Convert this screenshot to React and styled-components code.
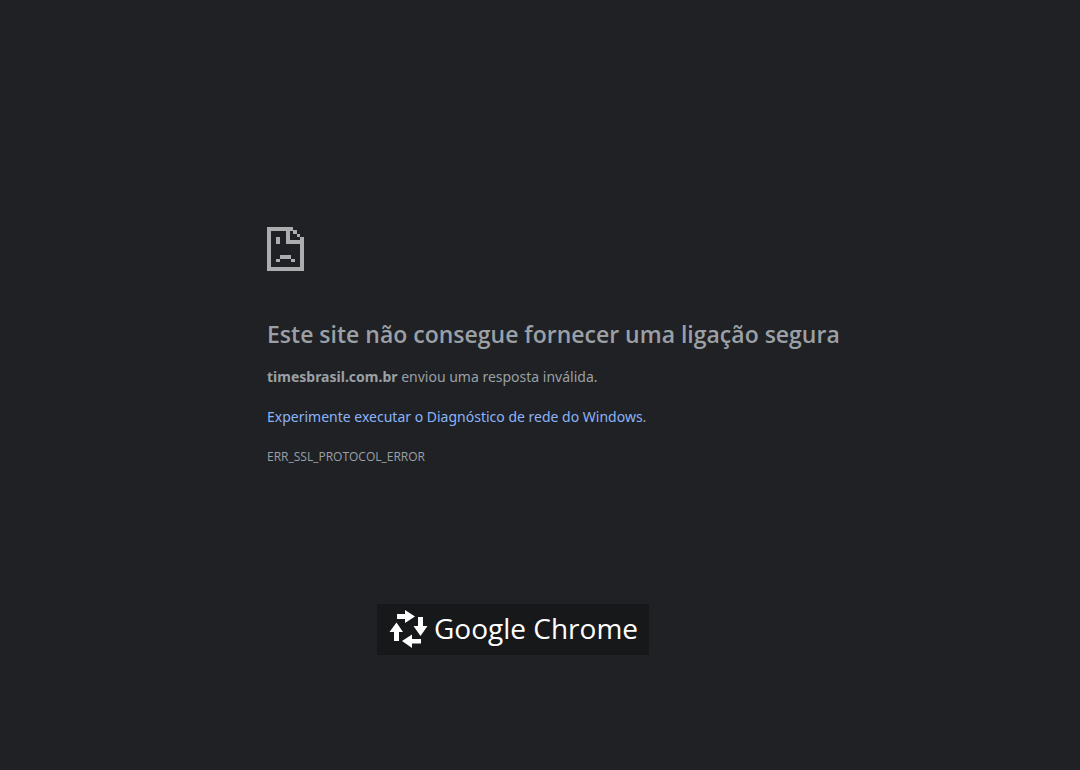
import React from "react";
import styled, { createGlobalStyle } from "styled-components";

const GlobalStyle = createGlobalStyle`
  body {
    margin: 0;
    background: #202124;
  }
`;
const Wrapper = styled.main`
  box-sizing: border-box;
  min-height: 100vh;
  padding: 227px 24px 24px 267px;
  background: #202124;
  color: #9aa0a6;
  font-family: "Noto Sans", "Open Sans", sans-serif;
`;
const SadPage = styled.svg`
  display: block;
  width: 37px;
  height: 44px;
  fill: #acadae;
`;
const Title = styled.h1`
  margin: 48px 0 0;
  font-family: "Open Sans", "Noto Sans", sans-serif;
  font-size: 23px;
  font-weight: 600;
  line-height: 30px;
`;
const Text = styled.p`
  margin: 16px 0 0;
  font-size: 14px;
  line-height: 24px;
`;
const Host = styled.strong`
  font-weight: 700;
`;
const DiagnoseLink = styled.a`
  color: #8ab4f8;
  text-decoration: none;
`;
const ErrorCode = styled.div`
  margin-top: 16px;
  font-family: "Open Sans", "Noto Sans", sans-serif;
  font-size: 12px;
  line-height: 24px;
`;
const Badge = styled.div`
  display: flex;
  align-items: center;
  gap: 6px;
  box-sizing: border-box;
  width: fit-content;
  height: 51px;
  margin: 135px 0 0 110px;
  padding: 0 11px 3px 12px;
  background: #17181a;
  color: #fff;
  font-family: "Open Sans", "Noto Sans", sans-serif;
  font-size: 28px;
  line-height: 38px;
  white-space: nowrap;
`;
const Arrows = styled.svg`
  width: 39px;
  height: 39px;
  fill: #fff;
`;

const SadPageIcon = () => (
  <SadPage viewBox="0 0 37 44" shapeRendering="crispEdges" aria-hidden="true">
    <path d="M0 0H26V4H23V13H37V17H19V4H4V40H33V10H37V44H0Z" />
    <path d="M26 3H30V7H26ZM30 7H33V10H30ZM33 10H37V14H33Z" />
    <path d="M9 10H13V17H9ZM13 28H24V32H13ZM9 32H13V35H9ZM24 32H28V35H24Z" />
  </SadPage>
);

const ArrowsIcon = () => (
  <Arrows viewBox="0 0 39 39" aria-hidden="true">
    <path d="M8 5H16V1L26 7.5L16 14V10H8Z" />
    <path d="M29 8H34V17H38.5L31.5 27L24.5 17H29Z" />
    <path d="M32 34.5H23V39L13 32L23 25.5V30H32Z" />
    <path d="M5 32V23H0.5L7.5 13.5L14 23H10V32Z" />
  </Arrows>
);

const App = () => {
  return (
    <>
      <GlobalStyle />
      <Wrapper>
        <SadPageIcon />
        <Title>Este site não consegue fornecer uma ligação segura</Title>
        <Text>
          <Host>timesbrasil.com.br</Host> enviou uma resposta inválida.
        </Text>
        <Text>
          <DiagnoseLink href="#diagnose">
            Experimente executar o Diagnóstico de rede do Windows
          </DiagnoseLink>
          .
        </Text>
        <ErrorCode>ERR_SSL_PROTOCOL_ERROR</ErrorCode>
        <Badge>
          <ArrowsIcon />
          <span>Google Chrome</span>
        </Badge>
      </Wrapper>
    </>
  );
};

export default App;
